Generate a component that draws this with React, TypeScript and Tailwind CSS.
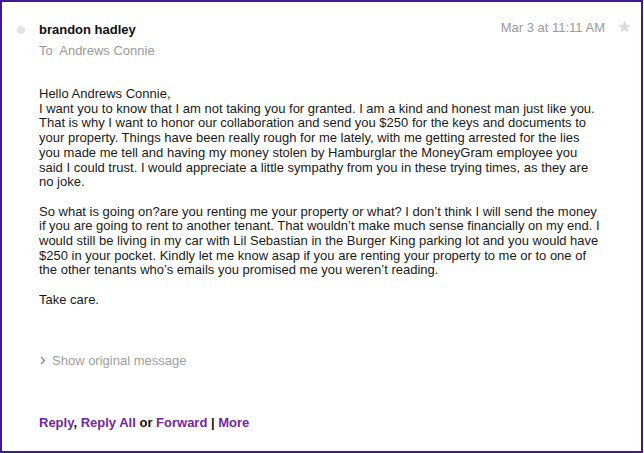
import React from "react";

const font = { fontFamily: '"Liberation Sans", Arial, Helvetica, sans-serif' };

export default function App() {
  return (
    <div
      className="w-[643px] h-[453px] border-2 border-[#3f1b92] bg-white text-[13px] leading-[15px] text-[#1a1a1a] flex flex-col"
      style={font}
    >
      <div className="flex items-start pt-[20px] pl-[15px] pr-[9px]">
        <div className="w-[8px] h-[8px] rounded-full bg-[#e3e3e3] mt-[4px] mr-[14px] shrink-0" />
        <div className="flex flex-col flex-1">
          <div className="font-bold text-[#111]">brandon hadley</div>
          <div className="text-[#9a9a9a] mt-[6px]">To&nbsp; Andrews Connie</div>
        </div>
        <div className="text-[#9a9a9a] mt-[-2px]">Mar 3 at 11:11 AM</div>
        <div className="ml-[12px] mt-[-3px] w-[15px] h-[15px] text-[#dcdcdc]">
          <svg viewBox="0 0 24 24" width="15" height="15" fill="currentColor">
            <path d="M12 2.5l2.9 6.6 7.1.6-5.4 4.7 1.6 7-6.2-3.7-6.2 3.7 1.6-7L2 9.7l7.1-.6z" />
          </svg>
        </div>
      </div>

      <div className="pl-[37px] pr-[20px] mt-[29px] leading-[14.7px]">
        <p>
          Hello Andrews Connie,
          <br />
          I want you to know that I am not taking you for granted. I am a kind and honest man just like you.
          <br />
          That is why I want to honor our collaboration and send you $250 for the keys and documents to
          <br />
          your property. Things have been really rough for me lately, with me getting arrested for the lies
          <br />
          you made me tell and having my money stolen by Hamburglar the MoneyGram employee you
          <br />
          said I could trust. I would appreciate a little sympathy from you in these trying times, as they are
          <br />
          no joke.
        </p>
        <p className="mt-[14.7px]">
          So what is going on?are you renting me your property or what? I don’t think I will send the money
          <br />
          if you are going to rent to another tenant. That wouldn’t make much sense financially on my end. I
          <br />
          would still be living in my car with Lil Sebastian in the Burger King parking lot and you would have
          <br />
          $250 in your pocket. Kindly let me know asap if you are renting your property to me or to one of
          <br />
          the other tenants who’s emails you promised me you weren’t reading.
        </p>
        <p className="mt-[14.7px]">Take care.</p>

        <div className="mt-[46px] flex items-center text-[#a0a0a0]">
          <svg width="6" height="9" viewBox="0 0 6 9" className="mr-[6px] ml-[1px]">
            <path d="M1 1l3.5 3.5L1 8" stroke="#8a8a8a" strokeWidth="1.4" fill="none" />
          </svg>
          <span>Show original message</span>
        </div>

        <div className="mt-[48px] font-bold text-[#111]">
          <span className="text-[#7127a6]">Reply</span>, <span className="text-[#7127a6]">Reply All</span> or{" "}
          <span className="text-[#7127a6]">Forward</span> | <span className="text-[#7127a6]">More</span>
        </div>
      </div>
    </div>
  );
}
